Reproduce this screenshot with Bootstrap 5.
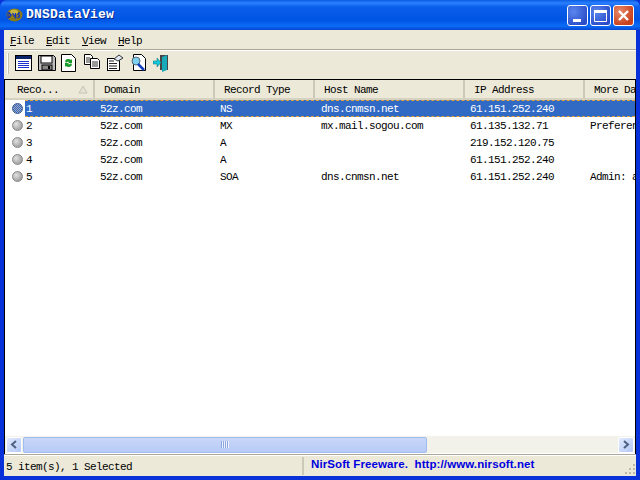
<!DOCTYPE html>
<html lang="en">
<head>
<meta charset="utf-8">
<title>DNSDataView</title>
<link href="https://cdn.jsdelivr.net/npm/bootstrap@5.3.0/dist/css/bootstrap.min.css" rel="stylesheet">
<style>
html,body{height:480px;overflow:hidden;background:#fff}
body{font:11px/12px "Liberation Mono",monospace;letter-spacing:-.6px;color:#000}
.xp-window{width:640px;height:480px;background:#0831d9}
.xp-title{height:30px;padding:0 6px 0 6px;background:linear-gradient(#0a5be0 0,#2a80ff 3px,#0a5eea 7px,#0054e3 20px,#0a6cf8 26px,#0546d0 30px);border-radius:7px 7px 0 0;color:#fff}
.xp-title-text{font:bold 13px/16px "Liberation Mono",monospace;letter-spacing:.2px;text-shadow:1px 1px 0 #0a2a8c;margin-left:3px}
.xp-logo{width:17px;height:14px}
.xp-btn{width:21px;height:21px;border:1px solid #fff;border-radius:3px;background:radial-gradient(circle at 30% 30%,#5a86ee,#2a4cc8 80%);margin-left:2px}
.xp-btn-close{background:radial-gradient(circle at 30% 30%,#e88a6a,#c8401c 75%)}
.xp-client{margin:0 4px 4px 4px;background:#ece9d8;min-height:0}
.xp-menu{height:20px;padding:1px 6px 0;gap:12px;font-size:11px;border-bottom:1px solid #aca899}
.xp-menu-item{width:24px;line-height:20px}
.xp-menu-item u{text-decoration-thickness:1px;text-underline-offset:1px}
.xp-tools{height:29px;padding:0 0 3px 3px;border-top:1px solid #fff}
.xp-grip{width:2px;height:21px;border-left:1px solid #fff;border-right:1px solid #c4c1ae;margin-right:6px}
.xp-tool{width:23px;height:19px}
.xp-list{border:1px solid #000;background:#fff;min-height:0;overflow:hidden}
.xp-head{height:20px;background:#ece9d8;border-bottom:2px solid #d6d2c2;flex:none}
.xp-hcell{flex:none;line-height:21px;padding-left:9px;position:relative;white-space:nowrap;overflow:hidden;border-right:2px solid #cdc9b8}
.xp-hcell:first-child{padding-left:12px}
.xp-sort{right:5px;top:5px;width:10px;height:9px}
.xp-w0{width:90px}.xp-w1{width:120px}.xp-w2{width:100px}.xp-w3{width:150px}.xp-w4{width:120px}.xp-w5{width:51px;border-right:0}
.xp-rows{min-height:0;background:#fff;overflow:hidden}
.xp-row{height:17px;flex:none}
.xp-ico{flex:none;width:20px;padding-left:7px;padding-top:3px}
.xp-dot{display:block;width:11px;height:11px;border-radius:50%;background:radial-gradient(circle at 35% 35%,#e2e2e2,#a4a4a4 70%);border:1px solid #888}
.xp-dot-sel{background:repeating-conic-gradient(#316ac5 0 25%,#a8a8b8 0 50%) 0 0/2px 2px;border-color:#33559a}
.xp-body{flex:1 1 auto;min-width:0;line-height:17px;overflow:hidden;white-space:nowrap;border:1px solid transparent;border-width:1px 0}
.xp-sel{background:#316ac5;color:#fff;border-color:#e3a13c;border-style:dashed}
.xp-cell{flex:none;overflow:hidden;padding-left:1px}
.xp-c0{width:74px}.xp-c1{width:120px}.xp-c2{width:101px}.xp-c3{width:149px}.xp-c4{width:120px}.xp-c5{width:60px}
.xp-scroll{height:17px;background:#f3f2ea;padding:0 1px;flex:none;margin-bottom:1px}
.xp-arrow{flex:none;width:16px;height:16px;border:1px solid #fff;border-radius:2px;background:linear-gradient(135deg,#e1eafe,#b4c8f6)}
.xp-thumb{width:404px;height:16px;margin-left:1px;border:1px solid #9ebcf0;border-radius:2px;background:linear-gradient(#c8d6f8,#b8cbf6);font-size:0}
.xp-rib{width:8px;height:7px;background:repeating-linear-gradient(90deg,#8ca6e0 0 1px,#eef3fe 1px 2px)}
.xp-track{min-width:0}
.xp-status{height:21px;line-height:20px;padding-left:2px;border-top:1px solid #fff;box-shadow:0 -1px 0 #aca899}
.xp-stat-left{width:298px;border-right:2px solid #cdc9b8;height:18px}
.xp-stat-right{font:bold 11.5px/15px "Liberation Sans",sans-serif;letter-spacing:.1px;color:#0000e0;padding-left:7px;height:18px}
.xp-rsz{right:0;bottom:1px;width:12px;height:12px}
</style>
</head>
<body class="m-0">
<div class="xp-window d-flex flex-column">
  <div class="xp-title d-flex align-items-center flex-none">
    <svg class="xp-logo" viewBox="0 0 17 14"><ellipse cx="8.5" cy="7" rx="8" ry="6.5" fill="#8a7a18"/><ellipse cx="8" cy="4" rx="4" ry="2.5" fill="#c8b840"/><path d="M2 9.500V5h1.500L5 7 3 9.500zM6.500 5l3 4.500V5M11 9c2 1 3.500-.5 2-2-1.500-.5-1.500-2 1-2" fill="none" stroke="#1535c0" stroke-width="1.300"/></svg>
    <span class="xp-title-text flex-grow-1">DNSDataView</span>
    <span class="xp-btn d-flex align-items-end justify-content-center"><svg width="11" height="8" viewBox="0 0 11 8"><rect x="1" y="2" width="8" height="3" fill="#fff"/></svg></span>
    <span class="xp-btn d-flex align-items-center justify-content-center"><svg width="13" height="13" viewBox="0 0 13 13"><path d="M.500 1.500h12v11H.500z" fill="none" stroke="#fff"/><rect y="1" width="13" height="3" fill="#fff"/></svg></span>
    <span class="xp-btn xp-btn-close d-flex align-items-center justify-content-center"><svg width="13" height="13" viewBox="0 0 13 13"><path d="M2 2l9 9M11 2l-9 9" stroke="#fff" stroke-width="2.400"/></svg></span>
  </div>
  <div class="xp-client flex-grow-1 d-flex flex-column">
    <div class="xp-menu d-flex flex-none">
      <span class="xp-menu-item"><u>F</u>ile</span>
      <span class="xp-menu-item"><u>E</u>dit</span>
      <span class="xp-menu-item"><u>V</u>iew</span>
      <span class="xp-menu-item"><u>H</u>elp</span>
    </div>
    <div class="xp-tools d-flex align-items-center flex-none">
      <span class="xp-grip"></span>
      <span class="xp-tool"><svg width="18" height="18" viewBox="0 0 18 18"><rect x=".5" y="1.500" width="16" height="15" fill="#fff" stroke="#000"/><rect x="1" y="2" width="15" height="3" fill="#0a246a"/><path d="M3 7.500h11M3 9.500h11M3 11.500h11M3 13.500h11" stroke="#1a2fd0"/></svg></span>
      <span class="xp-tool"><svg width="18" height="18" viewBox="0 0 18 18"><path d="M.5 1.500h15l2 2v13H.5z" fill="#bdbdbd" stroke="#000"/><rect x="3" y="2" width="11" height="7" fill="#fff" stroke="#000"/><rect x="4" y="11" width="10" height="5" fill="#888" stroke="#000"/><rect x="10" y="12" width="2" height="3" fill="#000"/></svg></span>
      <span class="xp-tool"><svg width="16" height="18" viewBox="0 0 16 18"><path d="M.5.500h10l4 4v13H.5z" fill="#fff" stroke="#000"/><path d="M4 7a4 4 0 0 1 6-1l1-1v4H7l1-1c-1-.6-2-.4-3 1zM11 11a4 4 0 0 1-6 1l-1 1V9h4l-1 1c1 .6 2 .4 3-1z" fill="#1a9a2a"/></svg></span>
      <span class="xp-tool"><svg width="17" height="15" viewBox="0 0 17 15"><path d="M.5.500h6l2 2v8H.5z" fill="#fff" stroke="#000"/><path d="M6.500 4.500h7l2 2v8h-9z" fill="#fff" stroke="#000"/><path d="M2 4h4M2 6h4M2 8h4M8 8h6M8 10h6M8 12h6" stroke="#333"/></svg></span>
      <span class="xp-tool"><svg width="17" height="17" viewBox="0 0 17 17"><rect x=".5" y="4.500" width="12" height="12" fill="#fff" stroke="#000"/><path d="M2 7h5M2 9.500h8M2 12h8M2 14.500h8" stroke="#222"/><path d="M7 5l5-4 4 3-5 3z" fill="#dfe6f5" stroke="#333"/></svg></span>
      <span class="xp-tool"><svg width="17" height="19" viewBox="0 0 17 19"><path d="M3.500.500h8l4 4v12h-12z" fill="#fff" stroke="#000"/><circle cx="6" cy="7" r="4" fill="#7dd0ee" stroke="#567"/><path d="M8 10l6 6" stroke="#1440c0" stroke-width="2.500"/></svg></span>
      <span class="xp-tool"><svg width="17" height="18" viewBox="0 0 17 18"><path d="M7 1h8v15H7z" fill="#444"/><path d="M9 3l5-2v15l-5 2z" fill="#19a9b8"/><path d="M0 7h4V4l4 4.500-4 4.500v-3H0z" fill="#12c8d8" stroke="#0a6a7a" stroke-width=".5"/></svg></span>
    </div>
    <div class="xp-list flex-grow-1 d-flex flex-column">
      <div class="xp-head d-flex">
        <div class="xp-hcell xp-w0">Reco...<svg class="xp-sort position-absolute" viewBox="0 0 10 9"><path d="M5 1l4 7H1z" fill="#e6e3d5" stroke="#c6c3b4"/></svg></div>
        <div class="xp-hcell xp-w1">Domain</div>
        <div class="xp-hcell xp-w2">Record Type</div>
        <div class="xp-hcell xp-w3">Host Name</div>
        <div class="xp-hcell xp-w4">IP Address</div>
        <div class="xp-hcell xp-w5">More Da</div>
      </div>
      <div class="xp-rows flex-grow-1">
        <div class="xp-row d-flex">
          <div class="xp-ico"><span class="xp-dot xp-dot-sel"></span></div>
          <div class="xp-body xp-sel d-flex"><span class="xp-cell xp-c0">1</span><span class="xp-cell xp-c1">52z.com</span><span class="xp-cell xp-c2">NS</span><span class="xp-cell xp-c3">dns.cnmsn.net</span><span class="xp-cell xp-c4">61.151.252.240</span><span class="xp-cell xp-c5"></span></div>
        </div>
        <div class="xp-row d-flex">
          <div class="xp-ico"><span class="xp-dot"></span></div>
          <div class="xp-body d-flex"><span class="xp-cell xp-c0">2</span><span class="xp-cell xp-c1">52z.com</span><span class="xp-cell xp-c2">MX</span><span class="xp-cell xp-c3">mx.mail.sogou.com</span><span class="xp-cell xp-c4">61.135.132.71</span><span class="xp-cell xp-c5">Preferen</span></div>
        </div>
        <div class="xp-row d-flex">
          <div class="xp-ico"><span class="xp-dot"></span></div>
          <div class="xp-body d-flex"><span class="xp-cell xp-c0">3</span><span class="xp-cell xp-c1">52z.com</span><span class="xp-cell xp-c2">A</span><span class="xp-cell xp-c3"></span><span class="xp-cell xp-c4">219.152.120.75</span><span class="xp-cell xp-c5"></span></div>
        </div>
        <div class="xp-row d-flex">
          <div class="xp-ico"><span class="xp-dot"></span></div>
          <div class="xp-body d-flex"><span class="xp-cell xp-c0">4</span><span class="xp-cell xp-c1">52z.com</span><span class="xp-cell xp-c2">A</span><span class="xp-cell xp-c3"></span><span class="xp-cell xp-c4">61.151.252.240</span><span class="xp-cell xp-c5"></span></div>
        </div>
        <div class="xp-row d-flex">
          <div class="xp-ico"><span class="xp-dot"></span></div>
          <div class="xp-body d-flex"><span class="xp-cell xp-c0">5</span><span class="xp-cell xp-c1">52z.com</span><span class="xp-cell xp-c2">SOA</span><span class="xp-cell xp-c3">dns.cnmsn.net</span><span class="xp-cell xp-c4">61.151.252.240</span><span class="xp-cell xp-c5">Admin: a</span></div>
        </div>
      </div>
      <div class="xp-scroll d-flex align-items-center">
        <span class="xp-arrow d-flex align-items-center justify-content-center"><svg width="8" height="9" viewBox="0 0 8 9"><path d="M6 1L2 4.500 6 8" fill="none" stroke="#4d6185" stroke-width="2"/></svg></span>
        <span class="xp-thumb d-flex align-items-center justify-content-center"><span class="xp-rib"></span></span>
        <span class="xp-track flex-grow-1"></span>
        <span class="xp-arrow d-flex align-items-center justify-content-center"><svg width="8" height="9" viewBox="0 0 8 9"><path d="M2 1l4 3.500L2 8" fill="none" stroke="#4d6185" stroke-width="2"/></svg></span>
      </div>
    </div>
    <div class="xp-status d-flex align-items-center flex-none position-relative">
      <div class="xp-stat-left">5 item(s), 1 Selected</div>
      <div class="xp-stat-right">NirSoft Freeware.&nbsp; http://www.nirsoft.net</div>
      <svg class="xp-rsz position-absolute" viewBox="0 0 12 12"><path d="M9 1h2v2H9zM5 5h2v2H5zM9 5h2v2H9zM1 9h2v2H1zM5 9h2v2H5zM9 9h2v2H9z" fill="#bdb9a6"/></svg>
    </div>
  </div>
</div>
</body>
</html>
